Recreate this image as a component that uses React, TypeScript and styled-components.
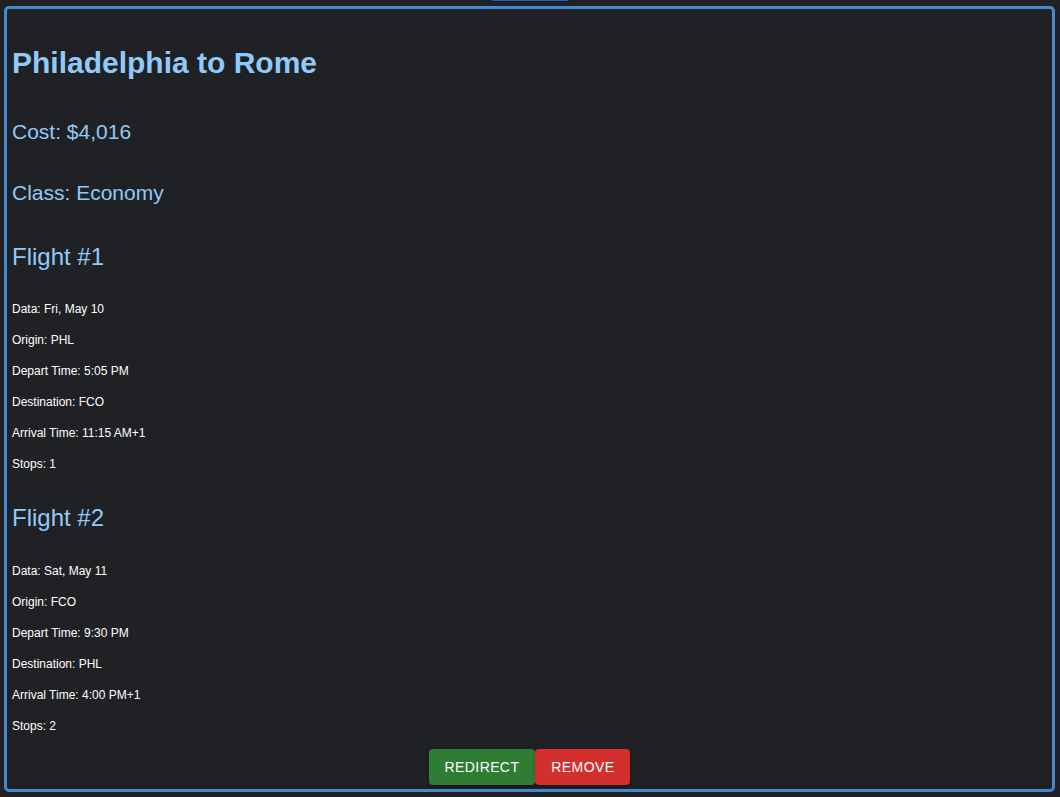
import React from "react";
import styled, { createGlobalStyle } from "styled-components";

const GlobalStyle = createGlobalStyle`
  html, body {
    margin: 0;
    padding: 0;
    background: #202124;
    font-family: "Liberation Sans", Arial, sans-serif;
  }
  * { box-sizing: border-box; }
`;

const Page = styled.div`
  display: flex;
  flex-direction: column;
  min-height: 797px;
`;

const TopTab = styled.div`
  align-self: center;
  width: 78px;
  height: 2px;
  background: #1565c0;
  border: 1px solid #15171a;
  border-top: none;
  border-radius: 0 0 3px 3px;
`;

const Card = styled.section`
  margin: 4px 5px 4px 4px;
  border: 3px solid #4688d0;
  border-radius: 5px;
  padding: 37px 5px 4px 5px;
  display: flex;
  flex-direction: column;
`;

const Title = styled.h1`
  margin: 0;
  font-size: 30px;
  line-height: 34px;
  font-weight: 700;
  color: #90caf9;
`;

const Info = styled.h2<{ $top: number }>`
  margin: ${(p) => p.$top}px 0 0;
  font-size: 21px;
  line-height: 24px;
  font-weight: 400;
  color: #90caf9;
`;

const FlightTitle = styled.h3<{ $top: number }>`
  margin: ${(p) => p.$top}px 0 0;
  font-size: 24px;
  line-height: 28px;
  font-weight: 400;
  color: #90caf9;
`;

const DetailList = styled.div<{ $top: number }>`
  margin-top: ${(p) => p.$top}px;
  display: flex;
  flex-direction: column;
  gap: 17px;
`;

const Detail = styled.p`
  margin: 0;
  font-size: 12px;
  line-height: 14px;
  color: #ffffff;
`;

const Actions = styled.div`
  margin-top: 16px;
  display: flex;
  justify-content: center;
`;

const Button = styled.button<{ $tone: "green" | "red" }>`
  height: 36px;
  padding: 6px 16px;
  border: none;
  border-radius: 4px;
  background: ${(p) => (p.$tone === "green" ? "#2e7d32" : "#d32f2f")};
  color: #ffffff;
  font-family: "Liberation Sans", Arial, sans-serif;
  font-size: 14px;
  font-weight: 500;
  letter-spacing: 0.4px;
  text-transform: uppercase;
  box-shadow: 0 3px 1px -2px rgba(0, 0, 0, 0.2), 0 2px 2px 0 rgba(0, 0, 0, 0.14),
    0 1px 5px 0 rgba(0, 0, 0, 0.12);
  cursor: pointer;
`;

type Flight = {
  date: string;
  origin: string;
  depart: string;
  destination: string;
  arrival: string;
  stops: number;
};

const flights: Flight[] = [
  { date: "Fri, May 10", origin: "PHL", depart: "5:05 PM", destination: "FCO", arrival: "11:15 AM+1", stops: 1 },
  { date: "Sat, May 11", origin: "FCO", depart: "9:30 PM", destination: "PHL", arrival: "4:00 PM+1", stops: 2 },
];

export default function App() {
  return (
    <>
      <GlobalStyle />
      <Page>
        <TopTab />
        <Card>
          <Title>Philadelphia to Rome</Title>
          <Info $top={40}>Cost: $4,016</Info>
          <Info $top={37}>Class: Economy</Info>
          {flights.map((f, i) => (
            <React.Fragment key={i}>
              <FlightTitle $top={i === 0 ? 38 : 33}>Flight #{i + 1}</FlightTitle>
              <DetailList $top={i === 0 ? 31 : 32}>
                <Detail>Data: {f.date}</Detail>
                <Detail>Origin: {f.origin}</Detail>
                <Detail>Depart Time: {f.depart}</Detail>
                <Detail>Destination: {f.destination}</Detail>
                <Detail>Arrival Time: {f.arrival}</Detail>
                <Detail>Stops: {f.stops}</Detail>
              </DetailList>
            </React.Fragment>
          ))}
          <Actions>
            <Button $tone="green">Redirect</Button>
            <Button $tone="red">Remove</Button>
          </Actions>
        </Card>
      </Page>
    </>
  );
}
